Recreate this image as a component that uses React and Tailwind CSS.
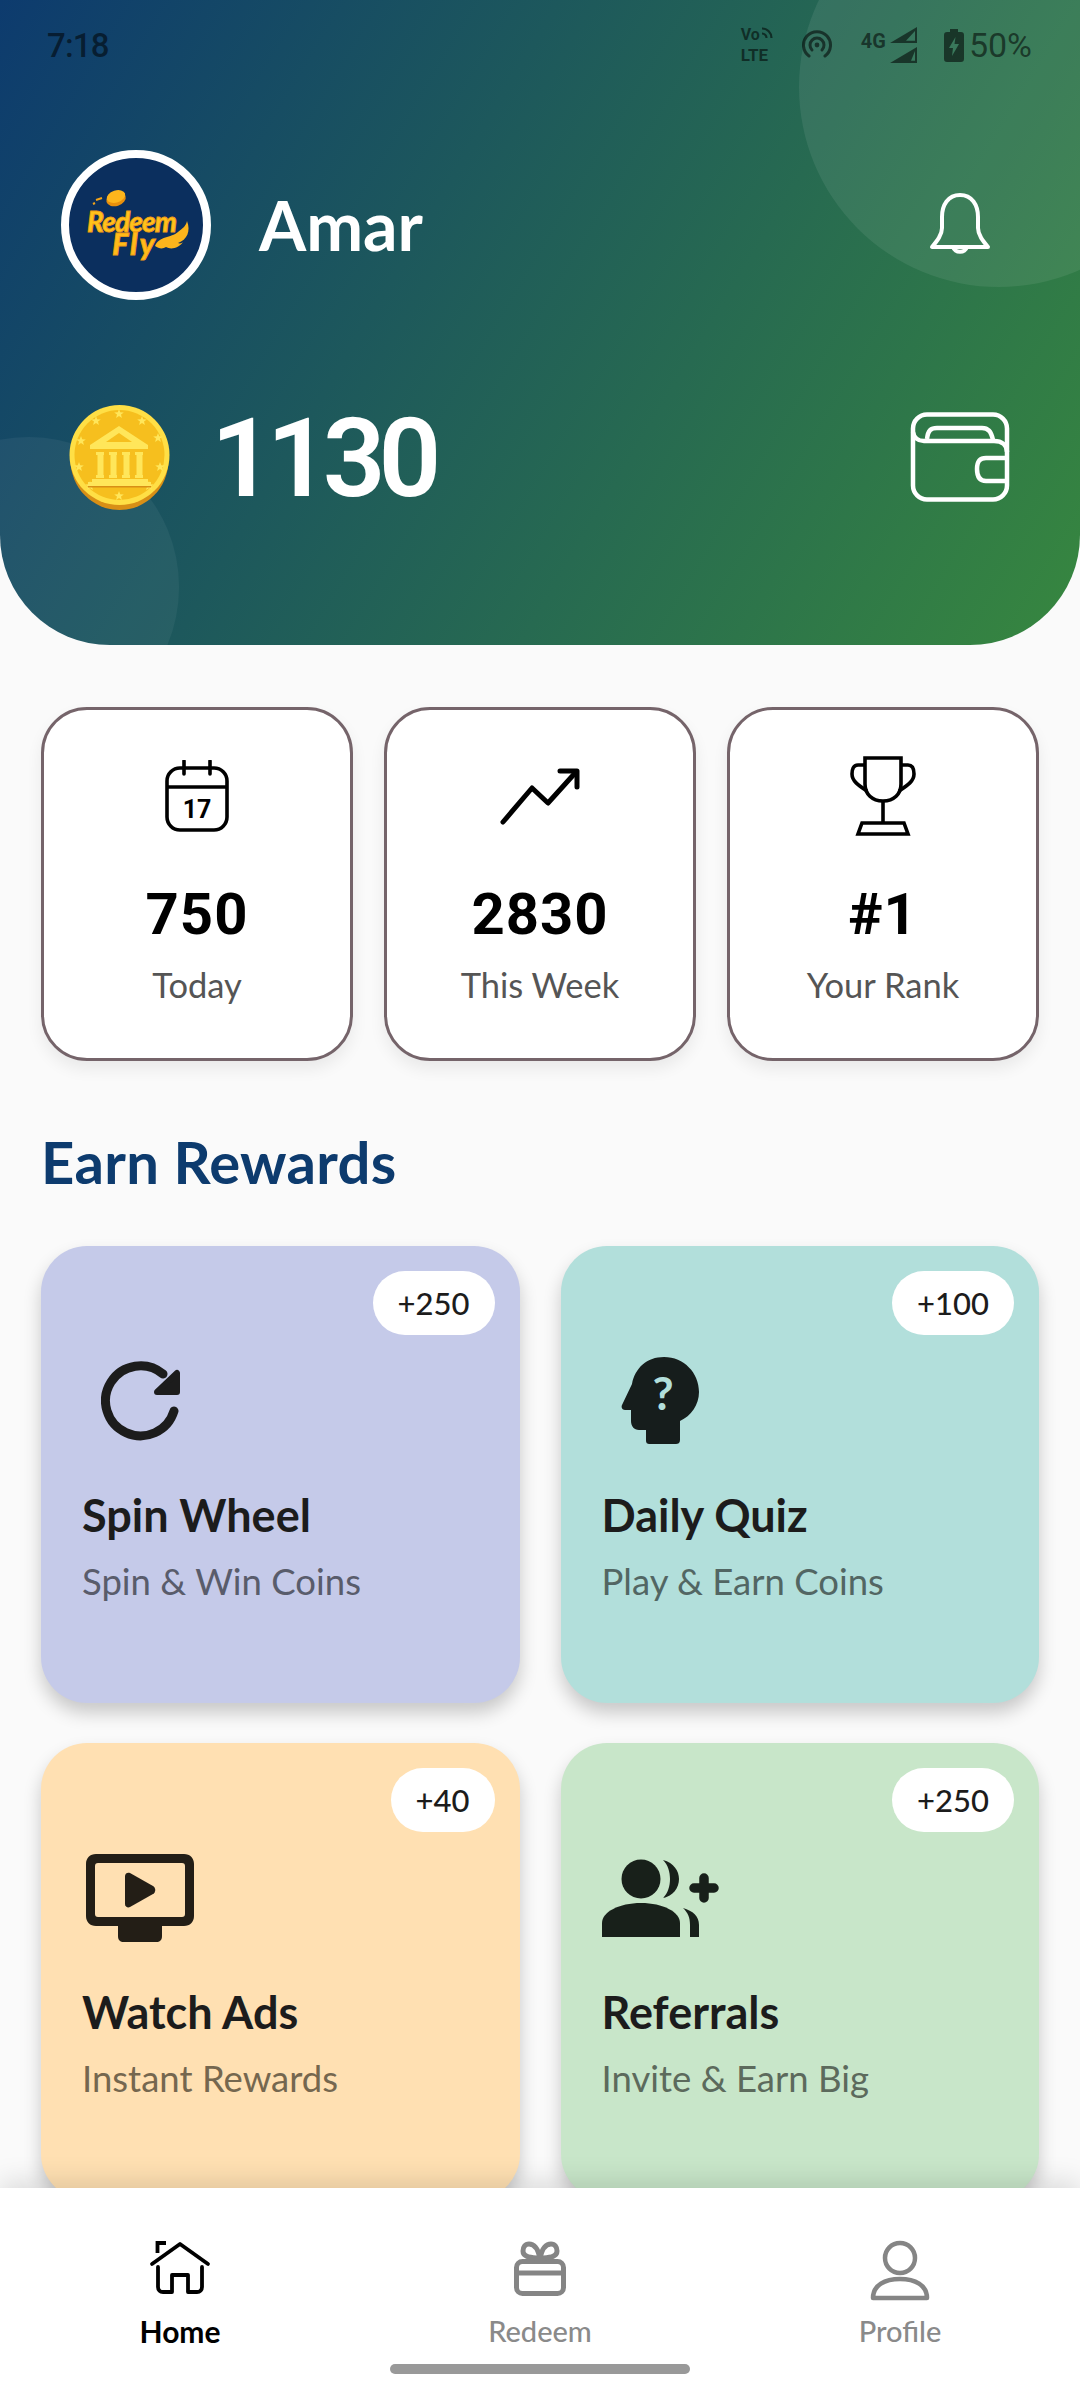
import React from "react";

const COIN_STARS = [
  [50, 9], [73, 16], [89, 33], [91, 62], [80, 81], [50, 91], [21, 81], [10, 62], [12, 36], [27, 16],
];

function starPoints(cx, cy, r) {
  const pts = [];
  for (let i = 0; i < 10; i++) {
    const rad = i % 2 === 0 ? r : r * 0.42;
    const a = (Math.PI / 5) * i - Math.PI / 2;
    pts.push(`${(cx + rad * Math.cos(a)).toFixed(1)},${(cy + rad * Math.sin(a)).toFixed(1)}`);
  }
  return pts.join(" ");
}

function Coin() {
  return (
    <svg viewBox="0 0 101 106" className="h-[106px] w-[101px] shrink-0">
      <ellipse cx="50.5" cy="55" rx="49" ry="50" fill="#d88f16" />
      <circle cx="50.5" cy="50" r="50" fill="#ffdf45" />
      <circle cx="50.5" cy="50" r="45" fill="#f6bf1e" />
      {COIN_STARS.map(([x, y]) => (
        <polygon key={`${x}-${y}`} points={starPoints(x, y, 5)} fill="#ffe65a" />
      ))}
      <path d="M50 21 L79 40 V44 H21 V40 Z" fill="#ffe65a" />
      <path d="M50 28 L63 37 H37 Z" fill="#f6bf1e" />
      {[31, 44, 57, 70].map((x) => (
        <g key={x} fill="#ffe65a">
          <rect x={x - 4} y="47" width="8" height="3" />
          <rect x={x - 2.5} y="50" width="6" height="20" />
          <rect x={x - 4} y="70" width="8" height="3" />
        </g>
      ))}
      <rect x="23" y="74" width="56" height="3" fill="#ffe65a" />
      <rect x="19" y="77" width="63" height="4" fill="#ffe65a" />
      <rect x="19" y="81" width="63" height="1.5" fill="#d88f16" />
    </svg>
  );
}

function Logo() {
  return (
    <svg viewBox="0 0 134 134" className="h-full w-full">
      <ellipse cx="47" cy="41" rx="10" ry="7" fill="#e88f0c" transform="rotate(-18 47 41)" />
      <ellipse cx="47" cy="38.5" rx="9.5" ry="6" fill="#fdb51c" transform="rotate(-18 47 38.5)" />
      <path d="M27 42 l6 -2 M24 46 l2 -1" stroke="#f4a418" strokeWidth="2" />
      <text x="18" y="74" textLength="90" fontFamily="Lato" fontWeight="900" fontStyle="italic" fontSize="28" fill="#ffc21c" stroke="#f49d12" strokeWidth="0.8">
        Redeem
      </text>
      <text x="43" y="97" textLength="43" fontFamily="Lato" fontWeight="900" fontStyle="italic" fontSize="31" fill="#ffbb1a" stroke="#f49d12" strokeWidth="0.8">
        Fly
      </text>
      <path d="M86 88 C90 78 102 80 109 74 C114 70 117 68 118 63 C122 73 118 82 109 85 C111 86 113 85 114 84 C110 90 102 92 97 89 C94 91 90 91 86 88 Z" fill="#fdb51c" />
    </svg>
  );
}

function StatusBar() {
  return (
    <div className="flex h-[90px] items-center justify-between pl-[47px] pr-[48px] text-black/55">
      <span className="font-['Roboto',sans-serif] text-[33px] font-medium leading-none tracking-tight">7:18</span>
      <div className="flex items-center">
        <div className="flex h-[36px] w-[36px] flex-col justify-between font-['Roboto',sans-serif] font-bold leading-none">
          <div className="flex items-start">
            <span className="text-[16px] leading-[15px]">Vo</span>
            <svg viewBox="0 0 12 12" className="ml-[1px] h-[12px] w-[12px]" fill="none" stroke="currentColor" strokeWidth="2.2">
              <path d="M1 1.5 a9.5 9.5 0 0 1 9.5 9.5 M1 6.5 a4.5 4.5 0 0 1 4.5 4.5" />
            </svg>
          </div>
          <span className="text-[17px] leading-[15px]">LTE</span>
        </div>
        <svg viewBox="0 0 30 30" className="ml-[25px] h-[30px] w-[30px]" fill="none" stroke="currentColor" strokeWidth="3" strokeLinecap="round">
          <path d="M7 26 A13.5 13.5 0 1 1 23 26" />
          <path d="M10 20 A7 7 0 1 1 20 20" />
          <circle cx="15" cy="15" r="2.4" fill="currentColor" stroke="none" />
        </svg>
        <span className="ml-[29px] -mt-[8px] font-['Roboto',sans-serif] text-[20px] font-bold leading-none">4G</span>
        <svg viewBox="0 0 30 38" className="ml-[3px] h-[38px] w-[30px]" fill="currentColor">
          <path d="M28 1 V17 H1 Z M26 5 L17 14.8 H26 Z" fillRule="evenodd" />
          <path d="M28 21 V37 H1 Z M26 25 L22 34.8 H26 Z" fillRule="evenodd" />
        </svg>
        <svg viewBox="0 0 20 33" className="ml-[25px] h-[33px] w-[20px]" fill="currentColor">
          <path d="M6 0 H14 V3 H17 Q20 3 20 6 V30 Q20 33 17 33 H3 Q0 33 0 30 V6 Q0 3 3 3 H6 Z M11.5 8 L5 19 H9 L8 27 L15 15 H10.5 Z" fillRule="evenodd" />
        </svg>
        <span className="ml-[5px] font-['Roboto',sans-serif] text-[34px] leading-none">50%</span>
      </div>
    </div>
  );
}

function Header() {
  return (
    <header className="relative h-[645px] shrink-0 overflow-hidden rounded-b-[110px] bg-[linear-gradient(121deg,#0d3b6e,#37873f)]">
      <div className="absolute -right-[119px] -top-[113px] h-[400px] w-[400px] rounded-full bg-white/8" />
      <div className="absolute -left-[121px] top-[437px] h-[300px] w-[300px] rounded-full bg-white/5" />
      <div className="relative">
        <StatusBar />
        <div className="mt-[60px] flex h-[150px] items-center justify-between pl-[61px] pr-[89px]">
          <div className="flex items-center">
            <div className="h-[150px] w-[150px] rounded-full border-[8px] border-white bg-[#0b2f5e]">
              <Logo />
            </div>
            <span className="ml-[48px] text-[68px] font-bold leading-none text-white">Amar</span>
          </div>
          <svg viewBox="0 0 62 64" className="h-[64px] w-[62px]" fill="none" stroke="white" strokeWidth="4" strokeLinejoin="round">
            <path d="M31 2 C19 2 13 12 13 24 V35 C13 42 8 48 3 54 H59 C54 48 49 42 49 35 V24 C49 12 43 2 31 2 Z" />
            <path d="M24 54 a7.5 7.5 0 0 0 14 0" />
          </svg>
        </div>
        <div className="mt-[105px] flex h-[106px] items-center justify-between pl-[69px] pr-[70px]">
          <div className="flex items-center">
            <Coin />
            <span className="ml-[41px] mt-[2px] font-['Roboto',sans-serif] text-[110px] font-semibold leading-none tracking-[-7px] text-white">1130</span>
          </div>
          <svg viewBox="0 0 100 90" className="-mt-[2px] h-[90px] w-[100px]" fill="none" stroke="white" strokeWidth="4.5" strokeLinejoin="round">
            <rect x="3" y="2.5" width="94" height="85" rx="14" />
            <path d="M3 20 C4 26 8 29 14 29 H84 C92 29 97 33 97 40" />
            <path d="M17 27 C18 18 21 16 27 16 H72 C78 16 81 19 83 28" />
            <path d="M97 46 H76 C70 46 67 49 67 57 C67 65 70 69 76 69 H97" />
          </svg>
        </div>
      </div>
    </header>
  );
}

function CalendarIcon() {
  return (
    <svg viewBox="0 0 64 72" className="h-[72px] w-[64px]" fill="none" stroke="black" strokeWidth="3.6">
      <rect x="2" y="8" width="60" height="62" rx="13" />
      <path d="M2 27 H62" />
      <path d="M19 1 V14 M45 1 V14" strokeLinecap="round" />
      <text x="32" y="58" textAnchor="middle" fontFamily="Roboto" fontWeight="700" fontSize="25" fill="black" stroke="none">17</text>
    </svg>
  );
}

function TrendIcon() {
  return (
    <svg viewBox="0 0 80 60" className="mt-[8px] h-[60px] w-[80px]" fill="none" stroke="black" strokeWidth="5" strokeLinecap="round" strokeLinejoin="round">
      <path d="M3 54 L32 20 L48 35 L76 4" />
      <path d="M60 3 H77 V19" />
    </svg>
  );
}

function TrophyIcon() {
  return (
    <svg viewBox="0 0 66 80" className="-mt-[4px] h-[80px] w-[66px]" fill="none" stroke="black" strokeWidth="3.6">
      <path d="M15 2 H51 V28 C51 38 44 45 33 45 C22 45 15 38 15 28 Z" />
      <path d="M15 9 H8 C3 9 2 14 2 18 C2 25 8 29 17 35" />
      <path d="M51 9 H58 C63 9 64 14 64 18 C64 25 58 29 49 35" />
      <path d="M33 45 V67" />
      <path d="M12 67 H54 L58 78 H8 Z" />
    </svg>
  );
}

function StatCard({ icon, value, label }) {
  return (
    <div className="flex h-[354px] flex-col items-center rounded-[46px] border-[3.5px] border-[#75646a] bg-white shadow-[0_8px_16px_rgba(0,0,0,0.07)]">
      <div className="mt-[50px] flex h-[72px] items-start justify-center">{icon}</div>
      <span className="mt-[52px] font-['Roboto',sans-serif] text-[58px] font-bold leading-[60px] tracking-[1px] text-black">{value}</span>
      <span className="mt-[20px] text-[34.5px] leading-[42px] text-[#555555]">{label}</span>
    </div>
  );
}

function SpinIcon() {
  return (
    <svg viewBox="0 0 80 80" className="ml-[19px] mt-[20px] h-[80px] w-[80px]" fill="#1c1c1c">
      <path d="M73 50 A35 35 0 1 1 62 13" fill="none" stroke="#1c1c1c" strokeWidth="9" strokeLinecap="round" />
      <path d="M76 12 V31 H56 Z" stroke="#1c1c1c" strokeWidth="6" strokeLinejoin="round" />
    </svg>
  );
}

function QuizIcon() {
  return (
    <svg viewBox="0 0 130 120" className="-ml-[11px] -mt-[1px] h-[120px] w-[130px]">
      <path d="M73 17 C93 17 108 33 108 52 C108 65 100 76 89 81 V100 C89 103 87 104 85 104 H59 C56 104 55 103 55 100 V90 H48 C43 90 40 86 40 81 V70 H34 C31 70 30 67 31 65 L41 44 C44 28 56 17 73 17 Z" fill="#161d1c" />
      <text x="72" y="70" textAnchor="middle" fontFamily="Lato" fontWeight="700" fontSize="46" fill="#b2dfdb">?</text>
    </svg>
  );
}

function AdsIcon() {
  return (
    <svg viewBox="0 0 108 90" className="ml-[4px] mt-[16px] h-[90px] w-[108px]" fill="#231e16">
      <path d="M10 0 H98 C104 0 108 4 108 10 V62 C108 68 104 72 98 72 H76 V82 C76 86 74 88 70 88 H38 C34 88 32 86 32 82 V72 H10 C4 72 0 68 0 62 V10 C0 4 4 0 10 0 Z M12 9 C10 9 9 10 9 12 V60 C9 62 10 63 12 63 H96 C98 63 99 62 99 60 V12 C99 10 98 9 96 9 Z" fillRule="evenodd" />
      <path d="M39 22 C39 19 42 18 44 19 L67 32 C70 34 70 38 67 40 L44 53 C42 54 39 53 39 50 Z" />
    </svg>
  );
}

function ReferIcon() {
  return (
    <svg viewBox="0 0 140 110" className="-ml-[11px] mt-[3px] h-[110px] w-[140px]" fill="#18201a">
      <circle cx="50" cy="38" r="19.5" />
      <path d="M72 19 C83 22 88 30 88 38 C88 47 82 55 72 57 C77 52 79 45 79 38 C79 31 77 24 72 19 Z" />
      <path d="M11 96 V82 C11 71 28 62 50 62 C72 62 89 71 89 82 V96 Z" />
      <path d="M92 67 C102 70 108 75 108 84 V96 H99 V84 C99 76 97 72 92 67 Z" />
      <path d="M113 37 V57 M103 47 H123" fill="none" stroke="#18201a" strokeWidth="9.5" strokeLinecap="round" />
    </svg>
  );
}

function RewardCard({ bg, subColor, badge, icon, title, subtitle }) {
  return (
    <div className={`relative h-[457px] rounded-[46px] px-[41px] shadow-[0_10px_18px_rgba(0,0,0,0.2)] ${bg}`}>
      <span className="absolute right-[25px] top-[25px] flex h-[64px] items-center rounded-[32px] bg-white px-[25px] text-[31px] font-medium leading-none text-[#1c1c1c]">
        {badge}
      </span>
      <div className="box-content h-[118px] pt-[95px]">{icon}</div>
      <h3 className="mt-[29px] text-[45px] font-bold leading-[54px] text-[#1c1c1c]">{title}</h3>
      <p className={`mt-[17px] text-[36.5px] leading-[44px] ${subColor}`}>{subtitle}</p>
    </div>
  );
}

function NavItem({ icon, label, active }) {
  return (
    <div className="flex w-[360px] flex-col items-center">
      <div className="h-[85px]">{icon}</div>
      <span className={`mt-[3px] leading-[36px] ${active ? "text-[30px] font-bold text-black" : "text-[29px] font-medium text-[#8a8a8a]"}`}>{label}</span>
    </div>
  );
}

function BottomNav() {
  return (
    <nav className="relative z-10 h-[212px] shrink-0 bg-white pt-[37px] shadow-[0_-6px_26px_rgba(0,0,0,0.13)]">
      <div className="flex">
        <NavItem
          active
          label="Home"
          icon={
            <svg viewBox="0 0 100 85" className="h-[85px] w-[100px]" fill="none" stroke="black" strokeWidth="3.8" strokeLinecap="round" strokeLinejoin="round">
              <path d="M22 39 L50 19 L78 39" />
              <path d="M27.5 28 V18 H36" strokeLinecap="butt" strokeLinejoin="miter" />
              <path d="M28 42 V62 C28 65 30 67 33 67 H42 V50 H58 V67 H67 C70 67 72 65 72 62 V42" />
            </svg>
          }
        />
        <NavItem
          label="Redeem"
          icon={
            <svg viewBox="0 0 80 85" className="h-[85px] w-[80px]" fill="none" stroke="#858585" strokeWidth="5" strokeLinejoin="round">
              <rect x="16.5" y="36.5" width="47" height="32" rx="6" />
              <path d="M16.5 48 H63.5" />
              <path d="M40 33 C38 24 35 19 29 19 C25 19 23 22 23 26 C23 31 28 33 40 33 C52 33 57 31 57 26 C57 22 55 19 51 19 C45 19 42 24 40 33 Z" />
            </svg>
          }
        />
        <NavItem
          label="Profile"
          icon={
            <svg viewBox="0 0 60 85" className="h-[85px] w-[60px]" fill="none" stroke="#858585" strokeWidth="4.5" strokeLinejoin="round">
              <circle cx="30" cy="33" r="15" />
              <path d="M3 73 C3 60 15 54 30 54 C45 54 57 60 57 73 Z" />
            </svg>
          }
        />
      </div>
      <div className="absolute bottom-[26px] left-[390px] h-[10px] w-[300px] rounded-full bg-[#999999]" />
    </nav>
  );
}

export default function App() {
  return (
    <div className="flex h-[2400px] w-[1080px] flex-col overflow-hidden bg-[#fafafa] font-['Lato',sans-serif]">
      <Header />
      <main className="min-h-0 flex-1 overflow-hidden px-[41px]">
        <div className="mt-[62px] grid grid-cols-3 gap-[31px]">
          <StatCard icon={<CalendarIcon />} value="750" label="Today" />
          <StatCard icon={<TrendIcon />} value="2830" label="This Week" />
          <StatCard icon={<TrophyIcon />} value="#1" label="Your Rank" />
        </div>
        <h2 className="mt-[70px] text-[58px] font-bold leading-[62px] tracking-[0.3px] text-[#0d3b6e]">Earn Rewards</h2>
        <div className="mt-[53px] grid grid-cols-2 gap-x-[41px] gap-y-[40px]">
          <RewardCard bg="bg-[#c5cae9]" subColor="text-[#595c6b]" badge="+250" icon={<SpinIcon />} title="Spin Wheel" subtitle="Spin & Win Coins" />
          <RewardCard bg="bg-[#b2dfdb]" subColor="text-[#526663]" badge="+100" icon={<QuizIcon />} title="Daily Quiz" subtitle="Play & Earn Coins" />
          <RewardCard bg="bg-[#ffe0b2]" subColor="text-[#75674f]" badge="+40" icon={<AdsIcon />} title="Watch Ads" subtitle="Instant Rewards" />
          <RewardCard bg="bg-[#c8e6c9]" subColor="text-[#5c6a5c]" badge="+250" icon={<ReferIcon />} title="Referrals" subtitle="Invite & Earn Big" />
        </div>
      </main>
      <BottomNav />
    </div>
  );
}
